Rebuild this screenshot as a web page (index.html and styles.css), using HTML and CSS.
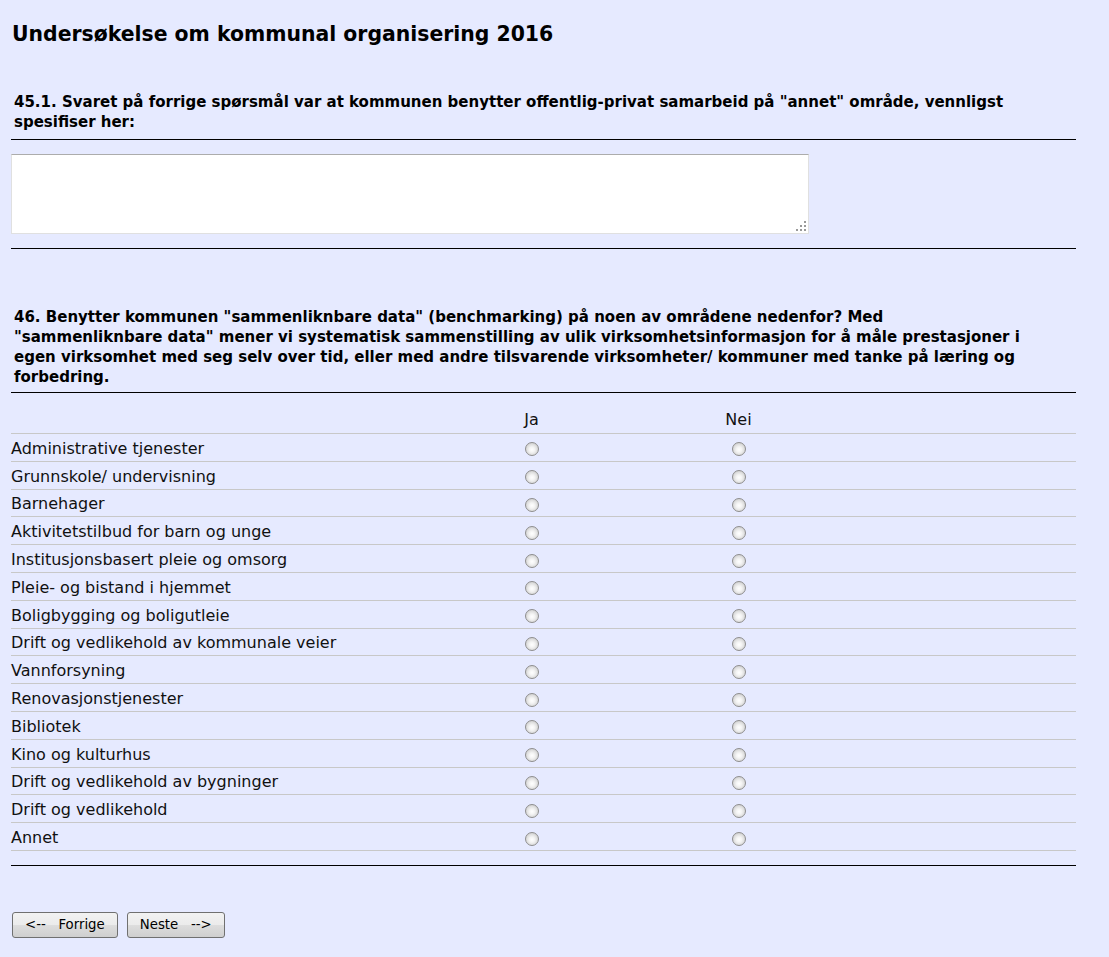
FILE: index.html
```html
<!DOCTYPE html>
<html lang="no">
<head>
<meta charset="utf-8">
<title>Undersøkelse om kommunal organisering 2016</title>
<link rel="stylesheet" href="styles.css">
</head>
<body>
<div class="page">
  <h1 class="title">Undersøkelse om kommunal organisering 2016</h1>

  <section class="question q451">
    <div class="qtext">45.1. Svaret på forrige spørsmål var at kommunen benytter offentlig-privat samarbeid på "annet" område, vennligst spesifiser her:</div>
    <div class="rule"></div>
    <div class="answer-wrap">
      <textarea class="answer"></textarea>
      <span class="grip"></span>
    </div>
    <div class="rule"></div>
  </section>

  <section class="question q46">
    <div class="qtext">46. Benytter kommunen "sammenliknbare data" (benchmarking) på noen av områdene nedenfor? Med "sammenliknbare data" mener vi systematisk sammenstilling av ulik virksomhetsinformasjon for å måle prestasjoner i egen virksomhet med seg selv over tid, eller med andre tilsvarende virksomheter/ kommuner med tanke på læring og forbedring.</div>
    <div class="rule"></div>
    <div class="grid">
      <div class="row head">
        <div class="label"></div>
        <div class="opt">Ja</div>
        <div class="opt">Nei</div>
        <div></div>
      </div>
      <div class="row"><div class="label">Administrative tjenester</div><div class="opt"><span class="radio"></span></div><div class="opt"><span class="radio"></span></div><div></div></div>
      <div class="row"><div class="label">Grunnskole/ undervisning</div><div class="opt"><span class="radio"></span></div><div class="opt"><span class="radio"></span></div><div></div></div>
      <div class="row"><div class="label">Barnehager</div><div class="opt"><span class="radio"></span></div><div class="opt"><span class="radio"></span></div><div></div></div>
      <div class="row"><div class="label">Aktivitetstilbud for barn og unge</div><div class="opt"><span class="radio"></span></div><div class="opt"><span class="radio"></span></div><div></div></div>
      <div class="row"><div class="label">Institusjonsbasert pleie og omsorg</div><div class="opt"><span class="radio"></span></div><div class="opt"><span class="radio"></span></div><div></div></div>
      <div class="row"><div class="label">Pleie- og bistand i hjemmet</div><div class="opt"><span class="radio"></span></div><div class="opt"><span class="radio"></span></div><div></div></div>
      <div class="row"><div class="label">Boligbygging og boligutleie</div><div class="opt"><span class="radio"></span></div><div class="opt"><span class="radio"></span></div><div></div></div>
      <div class="row"><div class="label">Drift og vedlikehold av kommunale veier</div><div class="opt"><span class="radio"></span></div><div class="opt"><span class="radio"></span></div><div></div></div>
      <div class="row"><div class="label">Vannforsyning</div><div class="opt"><span class="radio"></span></div><div class="opt"><span class="radio"></span></div><div></div></div>
      <div class="row"><div class="label">Renovasjonstjenester</div><div class="opt"><span class="radio"></span></div><div class="opt"><span class="radio"></span></div><div></div></div>
      <div class="row"><div class="label">Bibliotek</div><div class="opt"><span class="radio"></span></div><div class="opt"><span class="radio"></span></div><div></div></div>
      <div class="row"><div class="label">Kino og kulturhus</div><div class="opt"><span class="radio"></span></div><div class="opt"><span class="radio"></span></div><div></div></div>
      <div class="row"><div class="label">Drift og vedlikehold av bygninger</div><div class="opt"><span class="radio"></span></div><div class="opt"><span class="radio"></span></div><div></div></div>
      <div class="row"><div class="label">Drift og vedlikehold</div><div class="opt"><span class="radio"></span></div><div class="opt"><span class="radio"></span></div><div></div></div>
      <div class="row"><div class="label">Annet</div><div class="opt"><span class="radio"></span></div><div class="opt"><span class="radio"></span></div><div></div></div>
    </div>
    <div class="rule"></div>
  </section>

  <div class="nav">
    <button class="btn" type="button">&lt;--&nbsp;&nbsp;&nbsp;Forrige</button>
    <button class="btn" type="button">Neste&nbsp;&nbsp;&nbsp;--&gt;</button>
  </div>
</div>
</body>
</html>
```
FILE: styles.css
```css
html, body {
  margin: 0;
  padding: 0;
  background: #e6eaff;
}
body {
  font-family: "DejaVu Sans", Verdana, sans-serif;
  color: #000;
}
.page {
  width: 1065px;
  margin-left: 11px;
  padding-top: 21px;
}
.title {
  font-size: 20.4px;
  font-weight: bold;
  margin: 0 0 0 1px;
  line-height: 26px;
}
.question .qtext {
  font-size: 15px;
  font-weight: bold;
  line-height: 20px;
  padding: 0 40px 0 3px;
}
.q451 {
  margin-top: 45px;
}
.q46 {
  margin-top: 58px;
}
.rule {
  height: 1px;
  background: #000;
}
.q451 .qtext + .rule {
  margin-top: 7px;
}
.answer-wrap {
  position: relative;
  width: 798px;
  margin: 14px 0;
}
.answer {
  display: block;
  width: 798px;
  height: 80px;
  box-sizing: border-box;
  margin: 0;
  border: 1px solid #e0e0e0;
  border-top-color: #acacac;
  background: #fff;
  resize: none;
}
.grip {
  position: absolute;
  right: 3px;
  bottom: 3px;
  width: 10px;
  height: 10px;
  background:
    linear-gradient(#999, #999) 8px 0 / 2px 2px no-repeat,
    linear-gradient(#999, #999) 4px 4px / 2px 2px no-repeat,
    linear-gradient(#999, #999) 8px 4px / 2px 2px no-repeat,
    linear-gradient(#999, #999) 0 8px / 2px 2px no-repeat,
    linear-gradient(#999, #999) 4px 8px / 2px 2px no-repeat,
    linear-gradient(#999, #999) 8px 8px / 2px 2px no-repeat;
}
.q46 .qtext + .rule {
  margin-top: 5px;
}
.grid {
  margin-top: 17px;
  margin-bottom: 14px;
}
.row {
  display: grid;
  grid-template-columns: 417px 207px 207px 1fr;
  align-items: center;
  height: 27.8px;
  box-sizing: border-box;
  border-bottom: 1px solid #c8c8c8;
  font-size: 16px;
}
.row.head {
  height: 24px;
  align-items: end;
  padding-bottom: 6px;
}
.label {
  color: #111;
  padding-top: 2px;
}
.opt {
  text-align: center;
  color: #111;
}
.radio {
  display: inline-block;
  width: 14px;
  height: 14px;
  border-radius: 50%;
  border: 1px solid #8e8e8e;
  box-sizing: border-box;
  background: radial-gradient(circle at 50% 55%, #ffffff 0%, #f4f4f4 30%, #d6d6d6 70%, #bcbcbc 100%);
  vertical-align: middle;
  margin-top: 2px;
}
.nav {
  display: flex;
  gap: 9px;
  margin-top: 46px;
  padding-left: 1px;
}
.btn {
  font-family: "DejaVu Sans", Tahoma, sans-serif;
  font-size: 13.3px;
  height: 26px;
  padding: 0 12px;
  border: 1px solid #707070;
  border-radius: 3px;
  background: linear-gradient(#f2f2f2 0%, #ebebeb 50%, #dddddd 51%, #cfcfcf 100%);
  color: #000;
}
```
